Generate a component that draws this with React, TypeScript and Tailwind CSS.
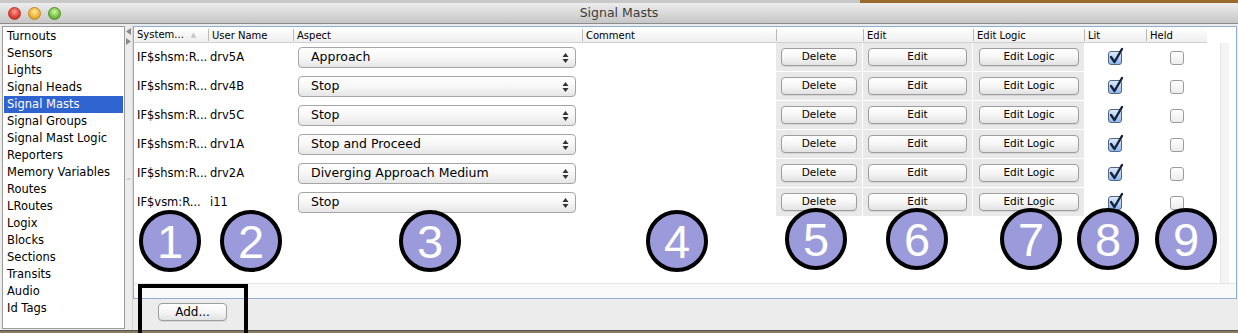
import React from 'react';

const navItems = [
  'Turnouts',
  'Sensors',
  'Lights',
  'Signal Heads',
  'Signal Masts',
  'Signal Groups',
  'Signal Mast Logic',
  'Reporters',
  'Memory Variables',
  'Routes',
  'LRoutes',
  'Logix',
  'Blocks',
  'Sections',
  'Transits',
  'Audio',
  'Id Tags',
];

const rows = [
  { system: 'IF$shsm:R...', user: 'drv5A', aspect: 'Approach' },
  { system: 'IF$shsm:R...', user: 'drv4B', aspect: 'Stop' },
  { system: 'IF$shsm:R...', user: 'drv5C', aspect: 'Stop' },
  { system: 'IF$shsm:R...', user: 'drv1A', aspect: 'Stop and Proceed' },
  { system: 'IF$shsm:R...', user: 'drv2A', aspect: 'Diverging Approach Medium' },
  { system: 'IF$vsm:R...', user: 'i11', aspect: 'Stop' },
];

const markers = [
  { n: '1', x: 170, y: 241 },
  { n: '2', x: 251, y: 241 },
  { n: '3', x: 430, y: 241 },
  { n: '4', x: 677, y: 241 },
  { n: '5', x: 816, y: 239 },
  { n: '6', x: 917, y: 239 },
  { n: '7', x: 1031, y: 239 },
  { n: '8', x: 1108, y: 239 },
  { n: '9', x: 1186, y: 239 },
];

const cols = 'grid grid-cols-[74px_85px_289px_194px_87px_110px_111px_62px_61px]';

function MacButton({ label, className = '' }: { label: string; className?: string }) {
  return (
    <div
      className={`h-[18px] rounded-[4px] border border-[#9d9d9d] bg-gradient-to-b from-white via-[#f6f6f6] to-[#e2e2e2] flex items-center justify-center text-[10.5px] text-black shadow-[0_1px_0_rgba(0,0,0,0.08)] ${className}`}
    >
      {label}
    </div>
  );
}

function Combo({ value }: { value: string }) {
  return (
    <div className="h-[21px] ml-[5px] mr-[6px] rounded-[4px] border border-[#a5a5a5] bg-gradient-to-b from-white via-[#f7f7f7] to-[#e6e6e6] flex items-center pl-[12px] pr-[6px] text-[12.5px] text-black">
      <span className="flex-1">{value}</span>
      <svg width="7" height="12" viewBox="0 0 7 12">
        <path d="M3.5 1 L6.5 5 L0.5 5 Z" fill="#333" />
        <path d="M3.5 11 L6.5 7 L0.5 7 Z" fill="#333" />
      </svg>
    </div>
  );
}

function CheckBox({ checked }: { checked: boolean }) {
  if (!checked) {
    return (
      <div className="w-[14px] h-[14px] rounded-[3px] border border-[#9c9c9c] bg-gradient-to-b from-white to-[#ececec]" />
    );
  }
  return (
    <div className="relative w-[14px] h-[14px] rounded-[3px] border border-[#4f6686] bg-gradient-to-b from-[#dce9fb] to-[#8fbaf0]">
      <svg className="absolute -top-[5px] -left-[1px]" width="17" height="18" viewBox="0 0 17 18">
        <path d="M3 10 L6.5 15 L14 2" fill="none" stroke="#16213a" strokeWidth="2.4" strokeLinecap="round" strokeLinejoin="round" />
      </svg>
    </div>
  );
}

export default function App() {
  return (
    <div className="relative w-[1238px] h-[333px] overflow-hidden bg-[#ececec] flex flex-col font-['DejaVu_Sans',sans-serif] text-black">
      {/* desktop behind the window */}
      <div className="h-[3px] flex">
        <div className="w-[860px] bg-[#c9c9c9]" />
        <div className="flex-1 bg-[#9a6a2c]" />
      </div>

      {/* Title bar */}
      <div className="relative h-[21px] bg-gradient-to-b from-[#ededed] to-[#c6c6c6] border-b border-[#8c8c8c] flex items-center">
        <div className="flex items-center gap-[7px] pl-[8px]">
          <span className="w-[13px] h-[13px] rounded-full bg-[radial-gradient(circle_at_50%_35%,#ff9b8f,#e0443a_55%,#a9231c)] border border-[#b5362d]" />
          <span className="w-[13px] h-[13px] rounded-full bg-[radial-gradient(circle_at_50%_35%,#ffe7a0,#f0b43a_55%,#b98116)] border border-[#c1891d]" />
          <span className="w-[13px] h-[13px] rounded-full bg-[radial-gradient(circle_at_50%_35%,#d2f5a8,#78c545_55%,#3f8a1c)] border border-[#4f8f2a]" />
        </div>
        <div className="absolute inset-0 flex items-center justify-center text-[12.5px] text-[#3b3b3b]">
          Signal Masts
        </div>
      </div>

      {/* Body */}
      <div className="flex-1 flex pt-[2px]">
        {/* left list */}
        <div className="ml-[2px] w-[123px] h-[303px] bg-white border border-[#9b9b9b] pt-[1px] px-[1px] text-[11.5px]">
          {navItems.map((item) => (
            <div
              key={item}
              className={`h-[17px] leading-[17px] pl-[3px] ${item === 'Signal Masts' ? 'bg-[#2f63cf] text-white' : ''}`}
            >
              {item}
            </div>
          ))}
        </div>

        {/* splitter */}
        <div className="w-[8px] flex flex-col items-center pt-[2px] gap-[3px] border-r border-[#d6d6d6]">
          <svg width="5" height="7" viewBox="0 0 5 7">
            <path d="M5 0 L0 3.5 L5 7 Z" fill="#8a8a8a" />
          </svg>
          <svg width="5" height="7" viewBox="0 0 5 7">
            <path d="M0 0 L5 3.5 L0 7 Z" fill="#8a8a8a" />
          </svg>
          <div className="mt-[130px] text-[8px] leading-none text-[#b0b0b0]">⌃</div>
        </div>

        {/* right side */}
        <div className="flex-1 flex flex-col">
          <div className="h-[273px] border border-[#8eaed3] bg-white flex flex-col mr-[1px]">
            <div className="flex-1 flex">
              <div className="w-[1086px]">
                {/* header */}
                <div className={`${cols} h-[16px] w-[1073px] bg-gradient-to-b from-white to-[#efefef] border-b border-[#cfcfcf] text-[10px]`}>
                  <div className="pl-[3px] leading-[16px] flex items-center">
                    System...
                    <span className="ml-[7px] text-[7px] text-[#c6c6c6]">▲</span>
                  </div>
                  {['User Name', 'Aspect', 'Comment', '', 'Edit', 'Edit Logic', 'Lit', 'Held'].map((h, i) => (
                    <div key={i} className="flex items-center">
                      <div className="w-px h-[12px] bg-[#b9b9b9]" />
                      <span className="pl-[3px]">{h}</span>
                    </div>
                  ))}
                </div>

                {/* rows */}
                {rows.map((r, i) => (
                  <div key={i} className={`${cols} h-[29px] w-[1073px] text-[11.5px]`}>
                    <div className="pl-[3px] flex items-center whitespace-nowrap overflow-hidden">{r.system}</div>
                    <div className="pl-[2px] flex items-center">{r.user}</div>
                    <div className="flex flex-col justify-center">
                      <Combo value={r.aspect} />
                    </div>
                    <div />
                    <div className="bg-[#e9e9e9] border-b border-r border-white flex items-center px-[5px]">
                      <MacButton label="Delete" className="flex-1" />
                    </div>
                    <div className="bg-[#e9e9e9] border-b border-r border-white flex items-center pl-[5px] pr-[5px]">
                      <MacButton label="Edit" className="flex-1" />
                    </div>
                    <div className="bg-[#e9e9e9] border-b border-white flex items-center pl-[6px] pr-[5px]">
                      <MacButton label="Edit Logic" className="flex-1" />
                    </div>
                    <div className="flex items-center justify-center">
                      <CheckBox checked />
                    </div>
                    <div className="flex items-center justify-center">
                      <CheckBox checked={false} />
                    </div>
                  </div>
                ))}
              </div>
              <div className="w-[9px] mt-[16px] bg-[#f4f4f4] border-l border-[#e8e8e8]" />
              <div className="flex-1" />
            </div>
            <div className="h-[15px] bg-[#f9f9f9] border-t border-[#e6e6e6]" />
          </div>

          {/* bottom bar */}
          <div className="flex-1 flex items-start pt-[4px] pl-[25px]">
            <MacButton label="Add..." className="w-[69px] text-[12px]" />
          </div>
        </div>
      </div>

      <div className="h-[3px] flex flex-col">
        <div className="h-[1px] bg-[#555555]" />
        <div className="flex-1 bg-[#8b7a5e]" />
      </div>

      {/* annotations */}
      <div className="absolute left-[138px] top-[284px] w-[110px] h-[60px] border-4 border-black" />
      {markers.map((m) => (
        <div
          key={m.n}
          className="absolute w-[62px] h-[62px] rounded-full bg-[#9b9bdb] border-[4px] border-black flex items-center justify-center text-white text-[47px] leading-none font-['Liberation_Sans',sans-serif]"
          style={{ left: m.x - 31, top: m.y - 31 }}
        >
          {m.n}
        </div>
      ))}
    </div>
  );
}
